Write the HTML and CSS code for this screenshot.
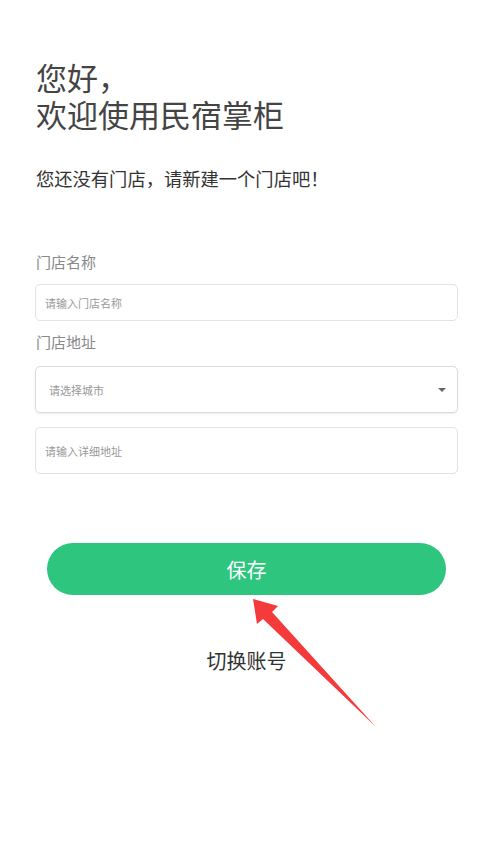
FILE: index.html
```html
<!DOCTYPE html>
<html lang="zh">
<head>
<meta charset="utf-8">
<link rel="stylesheet" href="styles.css">
</head>
<body>
<div class="page">
  <h1 class="title"><span class="line">您好，</span><span class="line">欢迎使用民宿掌柜</span></h1>
  <p class="notice">您还没有门店，请新建一个门店吧！</p>
  <div class="form">
    <div class="label">门店名称</div>
    <div class="field field-name"><span class="ph">请输入门店名称</span></div>
    <div class="label label-addr">门店地址</div>
    <div class="field field-select"><span class="ph">请选择城市</span><span class="caret"></span></div>
    <div class="field field-detail"><span class="ph">请输入详细地址</span></div>
  </div>
  <div class="btn">保存</div>
  <div class="switch">切换账号</div>
</div>
<svg class="arrow" width="493" height="856" viewBox="0 0 493 856">
  <polygon points="253,599 278,606 272,612 376,727 263,619 257,624" fill="#f43a3a"/>
</svg>
</body>
</html>
```
FILE: styles.css
```css
html, body {
  margin: 0;
  padding: 0;
  background: #fff;
}
body {
  font-family: "Noto Sans CJK SC", "Noto Sans", sans-serif;
  position: relative;
  width: 493px;
  height: 856px;
  overflow: hidden;
}
.page {
  padding: 58px 35px 0;
}
.title {
  margin: 0;
  padding-left: 1px;
  font-size: 31px;
  line-height: 37px;
  font-weight: 400;
  color: #444;
  display: flex;
  flex-direction: column;
}
.line {
  display: block;
  height: 37px;
}
.notice {
  margin: 34px 0 0;
  padding-left: 1px;
  font-size: 18.3px;
  line-height: 24px;
  color: #333;
}
.form {
  margin-top: 62px;
  display: flex;
  flex-direction: column;
}
.label {
  font-size: 15px;
  line-height: 20px;
  color: #888;
  padding-left: 1px;
}
.label-addr {
  margin-top: 11px;
}
.field {
  box-sizing: border-box;
  border: 1px solid #e3e3e3;
  border-radius: 5px;
  display: flex;
  align-items: center;
  padding-left: 9px;
}
.ph {
  font-size: 11px;
  color: #999;
}
.field-name {
  margin-top: 12px;
  height: 37px;
}
.field-select {
  margin-top: 14px;
  height: 47px;
  padding-left: 13px;
  padding-right: 11px;
  justify-content: space-between;
  border-color: #dcdcdc;
  box-shadow: 0 1px 2px rgba(0,0,0,0.08);
}
.caret {
  width: 0;
  height: 0;
  border-left: 4px solid transparent;
  border-right: 4px solid transparent;
  border-top: 4px solid #666;
}
.field-detail {
  margin-top: 14px;
  height: 47px;
}
.btn {
  margin: 69px 12px 0;
  height: 52px;
  border-radius: 26px;
  background: #2ec57e;
  color: #fff;
  font-size: 20px;
  display: flex;
  align-items: center;
  justify-content: center;
}
.switch {
  margin-top: 52px;
  text-align: center;
  font-size: 20px;
  line-height: 28px;
  color: #333;
}
.arrow {
  position: absolute;
  left: 0;
  top: 0;
  pointer-events: none;
}
```
